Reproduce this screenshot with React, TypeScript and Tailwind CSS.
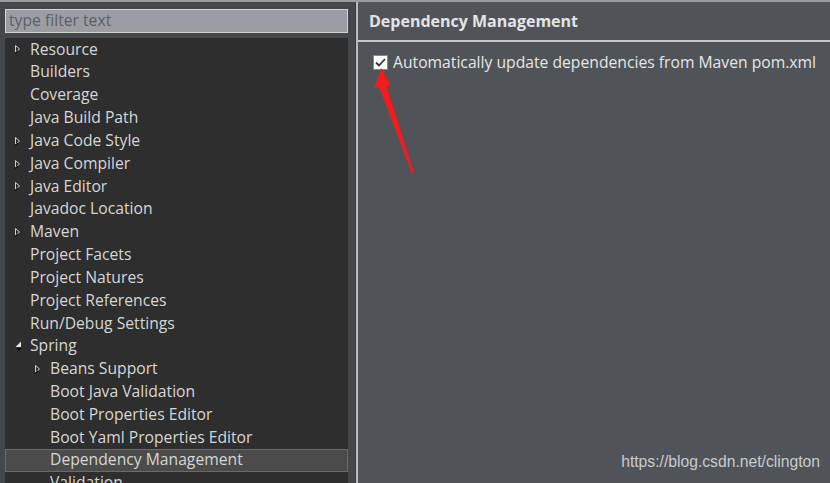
import React from "react"

type Item = { label: string; level: number; arrow?: "closed" | "open"; selected?: boolean }

const items: Item[] = [
  { label: "Resource", level: 1, arrow: "closed" },
  { label: "Builders", level: 1 },
  { label: "Coverage", level: 1 },
  { label: "Java Build Path", level: 1 },
  { label: "Java Code Style", level: 1, arrow: "closed" },
  { label: "Java Compiler", level: 1, arrow: "closed" },
  { label: "Java Editor", level: 1, arrow: "closed" },
  { label: "Javadoc Location", level: 1 },
  { label: "Maven", level: 1, arrow: "closed" },
  { label: "Project Facets", level: 1 },
  { label: "Project Natures", level: 1 },
  { label: "Project References", level: 1 },
  { label: "Run/Debug Settings", level: 1 },
  { label: "Spring", level: 1, arrow: "open" },
  { label: "Beans Support", level: 2, arrow: "closed" },
  { label: "Boot Java Validation", level: 2 },
  { label: "Boot Properties Editor", level: 2 },
  { label: "Boot Yaml Properties Editor", level: 2 },
  { label: "Dependency Management", level: 2, selected: true },
  { label: "Validation", level: 2 },
]

function Arrow({ kind }: { kind: "closed" | "open" }) {
  if (kind === "open") {
    return (
      <svg width="9" height="12" viewBox="0 0 9 12" className="shrink-0">
        <polygon points="2,8 8,8 5,11" fill="#0a0a0a" />
        <polygon points="7,1.5 7,7 1.5,7" fill="#e6e6e6" />
      </svg>
    )
  }
  return (
    <svg width="7" height="10" viewBox="0 0 7 10" className="shrink-0">
      <polygon points="1.5,1.5 5.5,5 1.5,8.5" fill="none" stroke="#cfcfcf" strokeWidth="1" />
      <line x1="1" y1="9.5" x2="4" y2="7" stroke="#111" strokeWidth="1.5" />
    </svg>
  )
}

function Row({ item }: { item: Item }) {
  const pad = item.level === 1 ? "pl-[8px]" : "pl-[28px]"
  return (
    <div
      className={`flex h-[22.83px] shrink-0 items-center ${pad} ${
        item.selected ? "border border-[#6b6d5c] bg-[#4b4b4b]" : "border border-transparent"
      }`}
    >
      <div className="flex w-[16px] items-center justify-start">
        {item.arrow && <Arrow kind={item.arrow} />}
      </div>
      <span className="whitespace-nowrap text-[15.7px] leading-none text-[#d6d6d6]">{item.label}</span>
    </div>
  )
}

export default function App() {
  return (
    <div
      className="relative flex h-[483px] w-[830px] overflow-hidden border-t-2 border-[#9a9c9e] bg-[#45484b]"
      style={{ fontFamily: '"Open Sans", "Noto Sans", sans-serif' }}
    >
      {/* left: filter + tree */}
      <div className="flex w-[356px] shrink-0 flex-col border-r border-[#3a3c3e] pl-[5px] pr-[7px] pt-[7px]">
        <div className="flex h-[24px] items-center border border-[#d0d2d4] bg-[#9a9ea4] px-[3px]">
          <span className="text-[15.7px] leading-none text-[#5c6066]">type filter text</span>
        </div>
        <div className="mt-[5px] flex flex-1 flex-col overflow-hidden bg-[#2e2e2e]">
          {items.map((it) => (
            <Row key={it.label} item={it} />
          ))}
        </div>
      </div>

      {/* right: page */}
      <div className="flex flex-1 flex-col border-l-2 border-[#b8babc] bg-[#505459]">
        <div className="flex h-[40px] items-center border-b-2 border-[#c4c6c8] pl-[11px]">
          <span className="text-[16px] font-bold text-[#e4e4e4]">Dependency Management</span>
        </div>
        <div className="flex items-center gap-[5px] pl-[15px] pt-[9px]">
          <div className="flex h-[15px] w-[15px] items-center justify-center border border-[#888] bg-white">
            <svg width="11" height="9" viewBox="0 0 11 9">
              <polyline points="1,4.5 4,7.5 10,1" fill="none" stroke="#333" strokeWidth="1.8" />
            </svg>
          </div>
          <span className="whitespace-nowrap text-[15.7px] text-[#e6e6e6]">
            Automatically update dependencies from Maven pom.xml
          </span>
        </div>
        <div className="flex flex-1 items-end justify-end pb-[9px] pr-[10px]">
          <span
            className="text-[15.7px] text-[#c8cacc]"
            style={{ fontFamily: '"Liberation Sans", Arial, sans-serif' }}
          >
            https://blog.csdn.net/clington
          </span>
        </div>
      </div>

      {/* red annotation arrow */}
      <svg className="pointer-events-none absolute left-0 top-0" width="830" height="483">
        <polygon points="381,66 374,86 379,85 412,172 414,171 386,83 391,84" fill="#f21c1c" />
      </svg>
    </div>
  )
}
